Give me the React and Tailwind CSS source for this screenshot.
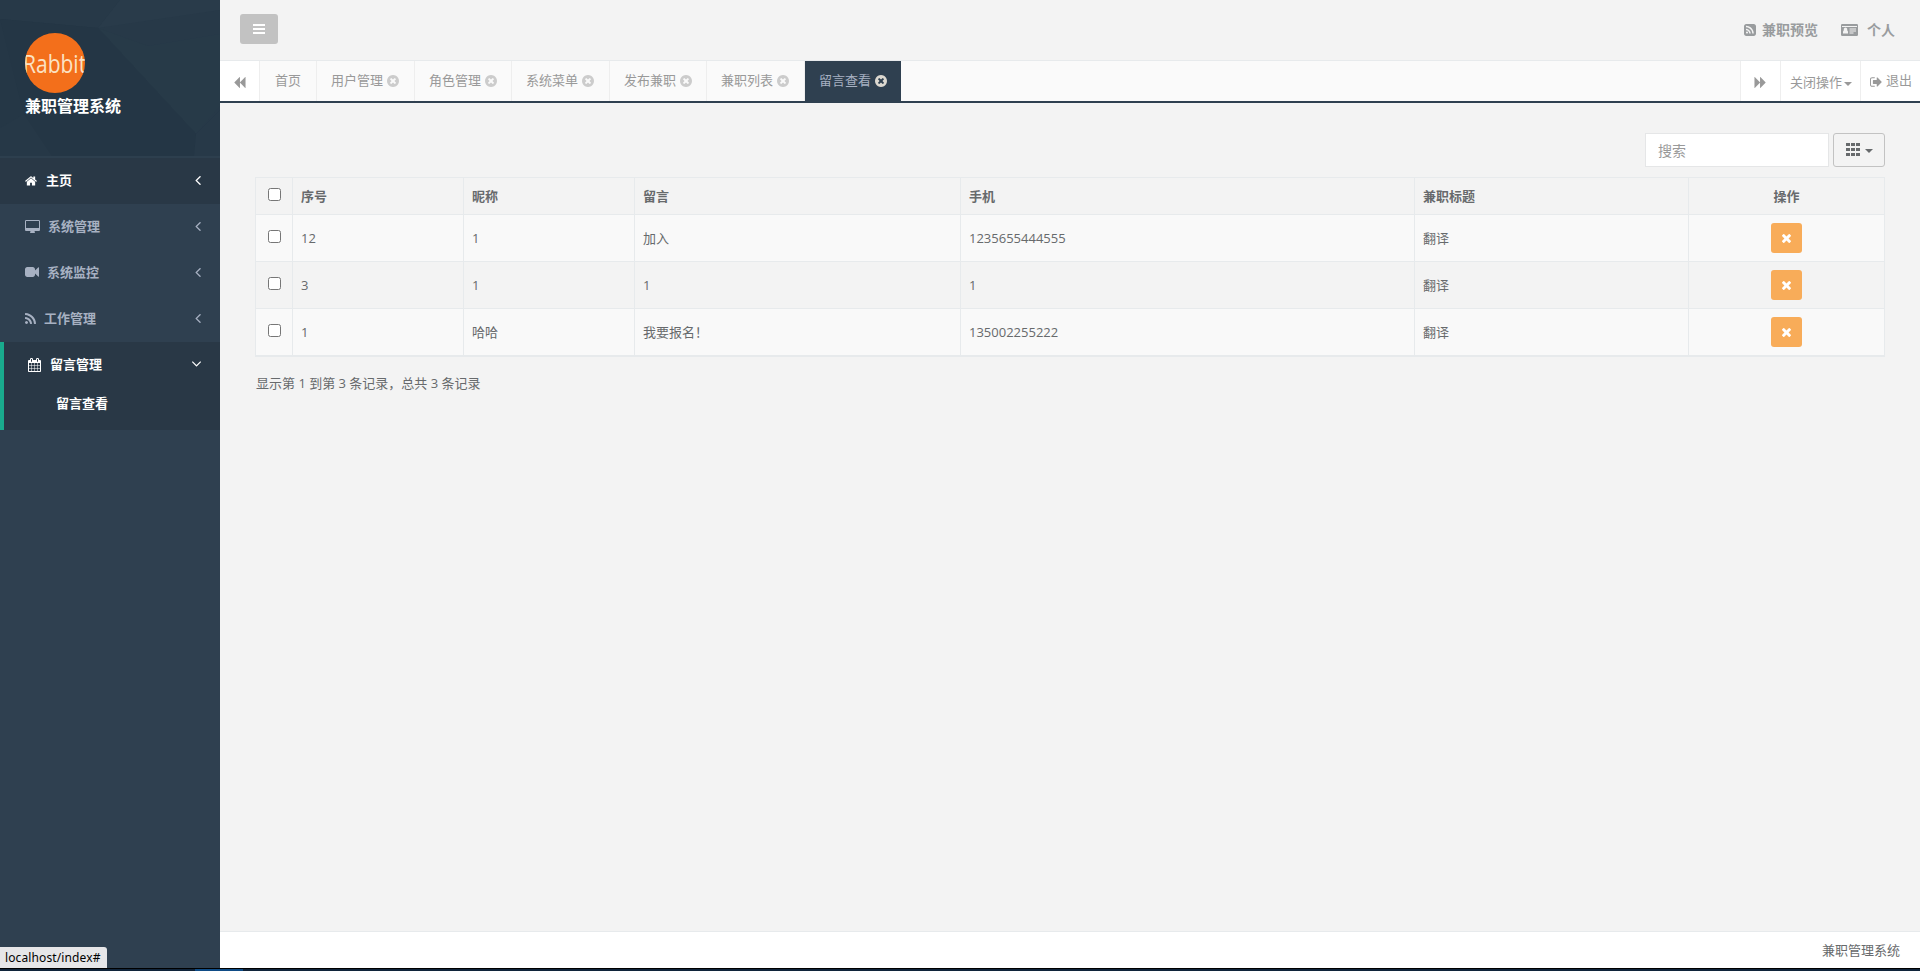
import React, { useState } from 'react';

const ICONS = {
  home: 'M1472 992v480q0 26-19 45t-45 19h-384v-384h-256v384h-384q-26 0-45-19t-19-45v-480q0-1 .5-3t.5-3l575-474 575 474q1 2 1 6zm223-69l-62 74q-8 9-21 11h-3q-13 0-21-7l-692-577-692 577q-12 8-24 7-13-2-21-11l-62-74q-8-10-7-23.5t11-21.5l719-599q32-26 76-26t76 26l244 204v-195q0-14 9-23t23-9h192q14 0 23 9t9 23v408l219 182q10 8 11 21.5t-7 23.5z',
  desktop:
    'M1728 992v-832q0-13-9.5-22.5t-22.5-9.5h-1600q-13 0-22.5 9.5t-9.5 22.5v832q0 13 9.5 22.5t22.5 9.5h1600q13 0 22.5-9.5t9.5-22.5zm128-832v1088q0 66-47 113t-113 47h-544q0 37 16 77.5t32 71 16 43.5q0 26-19 45t-45 19h-512q-26 0-45-19t-19-45q0-14 16-44t32-70 16-78h-544q-66 0-113-47t-47-113v-1088q0-66 47-113t113-47h1600q66 0 113 47t47 113z',
  video:
    'M1792 352v1088q0 42-39 59-13 5-25 5-27 0-45-19l-403-403v166q0 119-84.5 203.5t-203.5 84.5h-704q-119 0-203.5-84.5t-84.5-203.5v-704q0-119 84.5-203.5t203.5-84.5h704q119 0 203.5 84.5t84.5 203.5v165l403-402q18-19 45-19 12 0 25 5 39 17 39 59z',
  rss: 'M576 1344q0 80-56 136t-136 56-136-56-56-136 56-136 136-56 136 56 56 136zm512 123q2 28-17 48-18 21-47 21h-135q-25 0-43-16.5t-20-41.5q-22-229-184.5-391.5t-391.5-184.5q-25-2-41.5-20t-16.5-43v-135q0-29 21-47 17-17 43-17h5q160 13 306 80.5t259 181.5q114 113 181.5 259t80.5 306zm512 2q2 27-18 47-18 20-46 20h-143q-26 0-44.5-17.5t-19.5-42.5q-12-215-101-408.5t-231.5-336-336-231.5-408.5-102q-25-1-42.5-19.5t-17.5-43.5v-143q0-28 20-46 18-18 44-18h3q262 13 501.5 120t425.5 294q187 186 294 425.5t120 501.5z',
  rssSquare:
    'M640 1216q0-53-37.5-90.5t-90.5-37.5-90.5 37.5-37.5 90.5 37.5 90.5 90.5 37.5 90.5-37.5 37.5-90.5zm351 94q-13-232-177-396t-396-177q-14-1-24 9t-10 23v128q0 13 8.5 22t21.5 10q154 11 264 121t121 264q1 13 10 21.5t22 8.5h128q13 0 23-10t9-24zm384 1q-5-154-56-297.5t-139.5-260-205-205-260-139.5-297.5-56q-14-1-23 9-10 10-10 23v128q0 13 9 22t22 10q204 7 378 111.5t278.5 278.5 111.5 378q1 13 10 22t22 9h128q13 0 23-10 11-9 9-23zm289-895v960q0 119-84.5 203.5t-203.5 84.5h-960q-119 0-203.5-84.5t-84.5-203.5v-960q0-119 84.5-203.5t203.5-84.5h960q119 0 203.5 84.5t84.5 203.5z',
  calendar:
    'M192 1664h288v-288h-288v288zm352 0h320v-288h-320v288zm-352-352h288v-320h-288v320zm352 0h320v-320h-320v320zm-352-384h288v-288h-288v288zm736 736h320v-288h-320v288zm-384-736h320v-288h-320v288zm768 736h288v-288h-288v288zm-384-352h320v-320h-320v320zm-352-864v-288q0-13-9.5-22.5t-22.5-9.5h-64q-13 0-22.5 9.5t-9.5 22.5v288q0 13 9.5 22.5t22.5 9.5h64q13 0 22.5-9.5t9.5-22.5zm736 864h288v-320h-288v320zm-384-384h320v-288h-320v288zm384 0h288v-288h-288v288zm32-480v-288q0-13-9.5-22.5t-22.5-9.5h-64q-13 0-22.5 9.5t-9.5 22.5v288q0 13 9.5 22.5t22.5 9.5h64q13 0 22.5-9.5t9.5-22.5zm384-64v1280q0 52-38 90t-90 38h-1408q-52 0-90-38t-38-90v-1280q0-52 38-90t90-38h128v-96q0-66 47-113t113-47h64q66 0 113 47t47 113v96h384v-96q0-66 47-113t113-47h64q66 0 113 47t47 113v96h128q52 0 90 38t38 90z',
  angleLeft:
    'M1203 544q0 13-10 23l-393 393 393 393q10 10 10 23t-10 23l-50 50q-10 10-23 10t-23-10l-466-466q-10-10-10-23t10-23l466-466q10-10 23-10t23 10l50 50q10 10 10 23z',
  angleDown:
    'M1395 736q0 13-10 23l-466 466q-10 10-23 10t-23-10l-466-466q-10-10-10-23t10-23l50-50q10-10 23-10t23 10l393 393 393-393q10-10 23-10t23 10l50 50q10 10 10 23z',
  backward:
    'M1683 141q19-19 32-13t13 32v1472q0 26-13 32t-32-13l-710-710q-9-9-13-19v710q0 26-13 32t-32-13l-710-710q-19-19-19-45t19-45l710-710q19-19 32-13t13 32v710q4-10 13-19z',
  timesCircle:
    'M1277 1122q0-26-19-45l-181-181 181-181q19-19 19-45 0-27-19-46l-90-90q-19-19-46-19-26 0-45 19l-181 181-181-181q-19-19-45-19-27 0-46 19l-90 90q-19 19-19 46 0 26 19 45l181 181-181 181q-19 19-19 45 0 27 19 46l90 90q19 19 46 19 26 0 45-19l181-181 181 181q19 19 45 19 27 0 46-19l90-90q19-19 19-46zm387-226q0 209-103 385.5t-279.5 279.5-385.5 103-385.5-103-279.5-279.5-103-385.5 103-385.5 279.5-279.5 385.5-103 385.5 103 279.5 279.5 103 385.5z',
  signOut:
    'M704 1440q0 4 1 20t.5 26.5-3 23.5-10 19.5-20.5 6.5h-320q-119 0-203.5-84.5t-84.5-203.5v-704q0-119 84.5-203.5t203.5-84.5h320q13 0 22.5 9.5t9.5 22.5q0 4 1 20t.5 26.5-3 23.5-10 19.5-20.5 6.5h-320q-66 0-113 47t-47 113v704q0 66 47 113t113 47h312l11.5 1 11.5 3 8 5.5 7 9 2 13.5zm928-544q0 26-19 45l-544 544q-19 19-45 19t-45-19-19-45v-288h-448q-26 0-45-19t-19-45v-384q0-26 19-45t45-19h448v-288q0-26 19-45t45-19 45 19l544 544q19 19 19 45z',
  times:
    'M1490 1322q0 40-28 68l-136 136q-28 28-68 28t-68-28l-294-294-294 294q-28 28-68 28t-68-28l-136-136q-28-28-28-68t28-68l294-294-294-294q-28-28-28-68t28-68l136-136q28-28 68-28t68 28l294 294 294-294q28-28 68-28t68 28l136 136q28 28 28 68t-28 68l-294 294 294 294q28 28 28 68z',
};

const Icon = ({ name, box = '0 0 1792 1792', className = '' }) => (
  <svg viewBox={box} fill="currentColor" className={`shrink-0 ${className}`}>
    <path d={ICONS[name]} />
  </svg>
);

const IdCard = ({ className = '' }) => (
  <svg viewBox="0 0 17 12" fill="currentColor" className={`shrink-0 ${className}`}>
    <path
      fillRule="evenodd"
      d="M1.3 0h14.4A1.3 1.3 0 0 1 17 1.3v9.4a1.3 1.3 0 0 1-1.3 1.3H1.3A1.3 1.3 0 0 1 0 10.7V1.3A1.3 1.3 0 0 1 1.3 0zM1 2v1h15V2zM2 9.500h5V8q0-1.400-1-1.700a1.800 1.800 0 1 0-3 0Q2 6.600 2 8zM8.500 4.500h6.500v1H8.500zM8.500 6.500h6.500v1H8.500zM8.500 8.500h4v1h-4z"
    />
  </svg>
);

const Caret = ({ className = '' }) => (
  <span className={`inline-block border-x-4 border-t-4 border-x-transparent border-t-current ${className}`} />
);

const menus = [
  { icon: 'desktop', box: '-64 0 1920 1664', label: '系统管理', iconClass: 'w-[15px] h-[13px]', gap: 'gap-[8px]' },
  { icon: 'video', label: '系统监控', iconClass: 'w-[14px] h-[14px]', gap: 'gap-[8px]' },
  { icon: 'rss', box: '192 128 1408 1408', label: '工作管理', iconClass: 'w-[11px] h-[11px]', gap: 'gap-[8px]' },
];

const tabs = [
  { label: '用户管理', width: 'w-[98px]' },
  { label: '角色管理', width: 'w-[97px]' },
  { label: '系统菜单', width: 'w-[98px]' },
  { label: '发布兼职', width: 'w-[97px]' },
  { label: '兼职列表', width: 'w-[98px]' },
];

const rows = [
  { id: '12', nick: '1', message: '加入', phone: '1235655444555', title: '翻译' },
  { id: '3', nick: '1', message: '1', phone: '1', title: '翻译' },
  { id: '1', nick: '哈哈', message: '我要报名！', phone: '135002255222', title: '翻译' },
];

const Checkbox = (props) => (
  <input
    type="checkbox"
    className="block h-[13px] w-[13px] appearance-none rounded-[2.5px] border border-[#767676] bg-white checked:bg-[#0075ff]"
    {...props}
  />
);

const Sidebar = () => (
  <nav className="flex w-[220px] shrink-0 flex-col bg-[#2f4050] font-semibold text-[#a7b1c2]">
    <div className="relative h-[156px] overflow-hidden bg-[#253746]">
      <svg viewBox="0 0 220 156" className="absolute inset-0 h-full w-full">
        <path d="M0 0h120L98 28 0 19z" fill="#273948" />
        <path d="M120 0h100v110l-24 24L98 28z" fill="#273948" />
        <path d="M120 0h100v10L98 28z" fill="#293b4a" />
        <path d="M98 28l50 18 72-12v72l-24 28z" fill="#273a48" />
        <path d="M0 19l98 9 98 106-2 22H50L25 118z" fill="#243645" />
        <path d="M196 134l24-24v46h-26z" fill="#273948" />
        <path d="M0 128l24-14 28 42H0z" fill="#263847" />
      </svg>
      <div className="relative flex flex-col items-start px-[25px] pt-[33px]">
        <div className="flex h-[60px] w-[60px] items-center justify-center overflow-hidden rounded-full bg-[#f36f1b]">
          <span className="scale-x-[.84] whitespace-nowrap font-['Open_Sans'] text-[25px] font-medium leading-none text-[#fbe3c4]">
            Rabbit
          </span>
        </div>
        <strong className="mt-[1px] text-[16px] leading-[24px] font-bold text-white">兼职管理系统</strong>
      </div>
    </div>

    <a href="#" className="flex h-[48px] items-center border-t-2 border-[#2d3f4e] bg-[#293846] pl-[25px] pr-[19px] text-white">
      <Icon name="home" box="64 128 1664 1536" className="h-[12px] w-[12px]" />
      <span className="ml-[9px] pb-[2px]">主页</span>
      <Icon name="angleLeft" className="ml-auto mb-[2px] h-[9px] w-[6px]" box="590 470 613 980" />
    </a>

    {menus.map((m) => (
      <a key={m.label} href="#" className={`flex h-[46px] items-center pb-[2px] pl-[25px] pr-[19px] ${m.gap}`}>
        <Icon name={m.icon} box={m.box} className={m.iconClass} />
        <span>{m.label}</span>
        <Icon name="angleLeft" className="ml-auto h-[9px] w-[6px]" box="590 470 613 980" />
      </a>
    ))}

    <div className="h-[88px] border-l-4 border-[#19aa8d] bg-[#293846] text-white">
      <a href="#" className="flex h-[46px] items-center pl-[24px] pr-[19px]">
        <Icon name="calendar" box="64 0 1664 1792" className="h-[14px] w-[13px]" />
        <span className="ml-[9px] pb-[2px]">留言管理</span>
        <Icon name="angleDown" className="ml-auto mb-[2px] h-[6px] w-[9px]" box="397 663 998 572" />
      </a>
      <a href="#" className="-mt-px block pl-[52px] leading-[32px]">
        留言查看
      </a>
    </div>
  </nav>
);

const TopBar = () => (
  <header className="flex h-[60px] shrink-0 items-start px-[20px] pt-[14px]">
    <button className="flex h-[30px] w-[38px] items-center justify-center rounded-[3px] bg-[#c2c2c2]">
      <span className="flex w-[12px] flex-col gap-[2px]">
        <span className="h-[2px] bg-white" />
        <span className="h-[2px] bg-white" />
        <span className="h-[2px] bg-white" />
      </span>
    </button>
    <div className="ml-auto flex items-center pr-[5px] pt-[5px] text-[14px] leading-[22px] font-semibold text-[#999c9e]">
      <Icon name="rssSquare" box="128 128 1536 1536" className="h-[12px] w-[12px]" />
      <span className="ml-[6px]">兼职预览</span>
      <IdCard className="ml-[23px] h-[12px] w-[17px]" />
      <span className="ml-[9px]">个人</span>
    </div>
  </header>
);

const TabBar = () => (
  <div className="flex h-[43px] shrink-0 border-t border-b-2 border-t-[#e7eaec] border-b-[#2f4050] bg-[#fafafa] text-[#999]">
    <button className="flex w-[40px] items-center justify-center border-r border-[#eee] bg-white pt-[3px]">
      <Icon name="backward" className="h-[13px] w-[13px]" />
    </button>
    <a className="w-[57px] border-r border-[#eee] pl-[15px] leading-[39px]">首页</a>
    {tabs.map((t) => (
      <a key={t.label} className={`flex items-center gap-[4px] border-r border-[#eee] pl-[14px] ${t.width}`}>
        <span className="pb-[2px]">{t.label}</span>
        <Icon name="timesCircle" box="128 128 1536 1536" className="h-[12px] w-[12px] text-[#ccc]" />
      </a>
    ))}
    <a className="flex w-[96px] items-center gap-[4px] bg-[#2f4050] pl-[14px] text-[#a7b1c2]">
      <span className="pb-[2px]">留言查看</span>
      <Icon name="timesCircle" box="128 128 1536 1536" className="h-[12px] w-[12px] text-[#dcd8d0]" />
    </a>
    <div className="ml-auto flex bg-white">
      <button className="flex w-[41px] items-center justify-center border-x border-[#eee] pt-[3px]">
        <Icon name="backward" className="h-[13px] w-[13px] -scale-x-100" />
      </button>
      <button className="flex w-[80px] items-center border-r border-[#eee] pl-[9px] pt-px">
        关闭操作
        <Caret className="ml-[2px] mt-[4px]" />
      </button>
      <a className="flex w-[59px] items-center pl-[9px]">
        <Icon name="signOut" box="64 256 1600 1280" className="mt-[1px] h-[10px] w-[12px]" />
        <span className="ml-[4px] pb-[2px]">退出</span>
      </a>
    </div>
  </div>
);

const Toolbar = () => (
  <div className="flex justify-end gap-[4px]">
    <input
      type="text"
      placeholder="搜索"
      className="h-[34px] w-[184px] border border-[#e5e6e7] bg-white px-[12px] text-[14px] outline-none placeholder:text-[#999]"
    />
    <button className="flex h-[34px] w-[52px] items-center justify-center gap-[5px] rounded-[3px] border border-[#c2c2c2] text-[#676a6c]">
      <svg viewBox="0 0 14 13" fill="currentColor" className="mb-[2px] h-[13px] w-[14px]">
        {[0, 5, 10].map((x) => [0, 5, 10].map((y) => <rect key={`${x}-${y}`} x={x} y={y} width="4" height="3" />))}
      </svg>
      <Caret className="mt-[1px]" />
    </button>
  </div>
);

const MessageTable = () => {
  const [selected, setSelected] = useState([]);

  const toggle = (id) => {
    setSelected((prev) => (prev.includes(id) ? prev.filter((x) => x !== id) : [...prev, id]));
  };

  const toggleAll = () => {
    setSelected(selected.length === rows.length ? [] : rows.map((r) => r.id));
  };

  return (
    <table className="mt-[10px] w-full table-fixed border-collapse border border-b-2 border-[#e7eaec] text-left [&_td]:border [&_td]:border-[#e7eaec] [&_td]:px-[8px] [&_th]:border [&_th]:border-[#e7eaec] [&_th]:px-[8px]">
      <colgroup>
        <col className="w-[37px]" />
        <col className="w-[171px]" />
        <col className="w-[171px]" />
        <col className="w-[326px]" />
        <col className="w-[454px]" />
        <col className="w-[274px]" />
        <col className="w-[196px]" />
      </colgroup>
      <thead>
        <tr className="h-[37px] [&>th]:pb-px [&>th]:font-semibold">
          <th>
            <div className="flex justify-center pb-[3px]">
              <Checkbox checked={selected.length === rows.length} onChange={toggleAll} />
            </div>
          </th>
          <th>序号</th>
          <th>昵称</th>
          <th>留言</th>
          <th>手机</th>
          <th>兼职标题</th>
          <th className="text-center">操作</th>
        </tr>
      </thead>
      <tbody>
        {rows.map((r) => (
          <tr key={r.id} className="h-[47px] odd:bg-[#f9f9f9]">
            <td>
              <div className="flex justify-center pb-[3px]">
                <Checkbox checked={selected.includes(r.id)} onChange={() => toggle(r.id)} />
              </div>
            </td>
            <td>{r.id}</td>
            <td>{r.nick}</td>
            <td>{r.message}</td>
            <td>{r.phone}</td>
            <td>{r.title}</td>
            <td>
              <button className="mx-auto flex h-[30px] w-[31px] items-center justify-center rounded-[3px] bg-[#f8ac59] text-white">
                <Icon name="times" box="302 238 1188 1316" className="h-[10px] w-[9px]" />
              </button>
            </td>
          </tr>
        ))}
      </tbody>
    </table>
  );
};

const App = () => {
  return (
    <div className="relative flex h-[971px] w-[1920px] flex-col overflow-hidden bg-[#f3f3f4] font-['Open_Sans','Noto_Sans_CJK_SC',sans-serif] text-[13px] leading-[20px] text-[#676a6c]">
      <div className="flex min-h-0 flex-1">
        <Sidebar />
        <div className="flex min-w-0 flex-1 flex-col bg-[#f3f3f3]">
          <TopBar />
          <TabBar />
          <main className="flex-1 px-[35px] pt-[30px]">
            <Toolbar />
            <MessageTable />
            <p className="mt-[16px] pl-px">显示第 1 到第 3 条记录，总共 3 条记录</p>
          </main>
          <footer className="flex h-[37px] shrink-0 items-center justify-end border-t border-[#e7eaec] bg-white pr-[20px]">
            兼职管理系统
          </footer>
        </div>
      </div>
      {/* edge of the desktop taskbar */}
      <div className="flex h-[3px] shrink-0 border-t border-black bg-[#10243a]">
        <span className="ml-[195px] w-[48px] bg-[#0f4c86]" />
      </div>
      <div className="absolute bottom-[3px] left-0 h-[21px] w-[107px] rounded-tr-[3px] bg-[#e6e6e8] pl-[5px] font-['Noto_Sans'] text-[12px] leading-[21px] tracking-[.12px] text-black">
        localhost/index#
      </div>
    </div>
  );
};

export default App;
